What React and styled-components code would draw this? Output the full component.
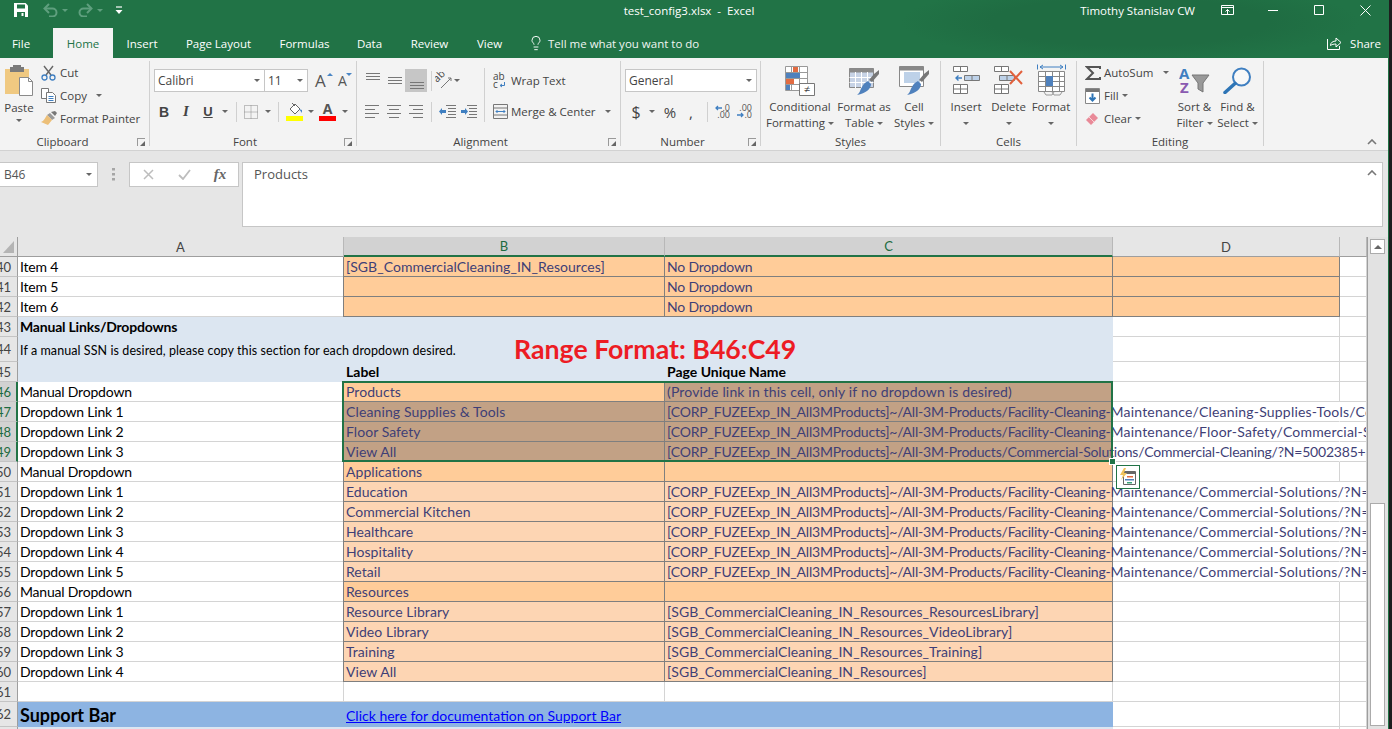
import styled, { createGlobalStyle } from "styled-components";
import { Lightbulb } from "lucide-react";

const UI = `"Open Sans", "Noto Sans", sans-serif`;
const CELL = `Lato, "Liberation Sans", sans-serif`;
const GREEN = "#217346";

const GlobalStyle = createGlobalStyle`
  html, body { margin: 0; padding: 0; background: #1e1e1e; overflow: hidden; }
  * { box-sizing: border-box; }
`;

const Page = styled.div`
  width: 1392px;
  height: 729px;
  overflow: hidden;
  background: #1e1e1e;
`;

const Win = styled.div`
  width: 1389px;
  height: 729px;
  display: flex;
  flex-direction: column;
  border-right: 1px solid ${GREEN};
  font-family: ${UI};
  color: #444;
`;

/* ---------- title bar + tabs ---------- */

const Header = styled.div`
  background: radial-gradient(ellipse 230px 40px at 1130px 22px, #1f6c42 60%, transparent 100%), ${GREEN};
  color: #fff;
`;

const TitleBar = styled.div`
  height: 28px;
  display: grid;
  grid-template-columns: 1fr auto 1fr;
  align-items: center;
  padding-right: 10px;
`;

const Quick = styled.div`
  display: flex;
  align-items: center;
  padding-left: 8px;
  margin-top: -8px;
`;

const Slot = styled.span`
  width: ${(p) => p.$w}px;
  margin-left: ${(p) => p.$ml || 0}px;
  flex: none;
  display: inline-flex;
  align-items: center;
  justify-content: center;
`;

const DocTitle = styled.div`
  font-size: 11.5px;
  white-space: pre;
  margin-top: -8px;
`;

const WinRight = styled.div`
  display: flex;
  align-items: center;
  justify-content: flex-end;
  margin-right: -10px;
  margin-top: -8px;
`;

const UserName = styled.span`
  font-size: 11.5px;
  margin-right: 9px;
`;

const WinBtn = styled.span`
  width: 46px;
  display: inline-flex;
  justify-content: center;
`;

const TabBar = styled.div`
  height: 30px;
  display: flex;
  align-items: stretch;
  font-size: 11.5px;
`;

const Tab = styled.div`
  width: ${(p) => p.$w}px;
  margin-right: ${(p) => p.$mr || 0}px;
  display: flex;
  align-items: center;
  justify-content: center;
  background: ${(p) => (p.$active ? "#f3f3f3" : "transparent")};
  color: ${(p) => (p.$active ? GREEN : "#fff")};
`;

const TellMe = styled.div`
  margin-left: 12px;
  display: flex;
  align-items: center;
  gap: 4px;
  color: #f0f5f2;
`;

const Share = styled.div`
  margin-left: auto;
  margin-right: 7px;
  display: flex;
  align-items: center;
  gap: 8px;
`;

/* ---------- ribbon ---------- */

const Ribbon = styled.div`
  height: 93px;
  background: #f3f3f3;
  border-bottom: 1px solid #d2d2d2;
  padding-top: 3px;
  display: flex;
  position: relative;
  font-size: 11.5px;
  color: #444;
`;

const Group = styled.div`
  width: ${(p) => p.$w}px;
  height: 85px;
  flex: none;
  border-right: 1px solid #d0d0d0;
  display: flex;
  flex-direction: column;
`;

const Body = styled.div`
  height: 75px;
  display: flex;
  align-items: flex-start;
  padding-left: ${(p) => p.$pl || 0}px;
`;

const GroupName = styled.div`
  height: 10px;
  line-height: 12px;
  margin-top: 1px;
  text-align: center;
  padding-right: ${(p) => p.$pr || 0}px;
  font-size: 11.5px;
  position: relative;
`;

const Launcher = styled.span`
  position: absolute;
  right: 4px;
  top: 2px;
  width: 8px;
  height: 8px;
  display: block;
  border-left: 1px solid #999;
  border-top: 1px solid #999;
  &::after {
    content: "";
    position: absolute;
    right: 0;
    bottom: 0;
    border-left: 5px solid transparent;
    border-bottom: 5px solid #666;
  }
`;

const Collapse = styled.span`
  position: absolute;
  right: 11px;
  bottom: 5px;
  display: flex;
`;

const Caret = styled.span`
  display: inline-block;
  width: 0;
  height: 0;
  border-left: 3px solid transparent;
  border-right: 3px solid transparent;
  border-top: 3px solid ${(p) => p.$c || "#666"};
  margin-left: ${(p) => p.$ml || 0}px;
  vertical-align: middle;
`;

const PasteBtn = styled.div`
  width: 41px;
  flex: none;
  display: flex;
  flex-direction: column;
  align-items: center;
  padding-right: 3px;
  padding-top: 3px;
  line-height: 15px;
  gap: 4px;
`;

const SmallStack = styled.div`
  width: ${(p) => p.$w}px;
  flex: none;
  padding-left: ${(p) => p.$pl || 0}px;
  display: flex;
  flex-direction: column;
`;

const SmallBtn = styled.div`
  height: 23px;
  display: flex;
  align-items: center;
  white-space: nowrap;
`;

const SmallIcon = styled.span`
  width: ${(p) => p.$w || 19}px;
  flex: none;
  display: inline-flex;
  align-items: center;
`;

const RowStack = styled.div`
  padding-top: 8px;
  display: flex;
  flex-direction: column;
  gap: 8px;
`;

const ToolRow = styled.div`
  height: 23px;
  display: flex;
  align-items: center;
  margin-left: ${(p) => p.$ml || 0}px;
`;

const Select = styled.div`
  width: ${(p) => p.$w}px;
  height: 23px;
  margin-left: ${(p) => p.$ml || 0}px;
  background: #fff;
  border: 1px solid #c6c6c6;
  display: flex;
  align-items: center;
  justify-content: space-between;
  padding: 0 4px 0 3px;
  font-size: 12px;
  color: #444;
`;

const Sep = styled.span`
  width: 1px;
  height: ${(p) => p.$h || 20}px;
  background: #d0d0d0;
  flex: none;
  margin-left: ${(p) => p.$ml || 0}px;
  margin-top: ${(p) => p.$mt || 0}px;
`;

const Tool = styled.span`
  width: ${(p) => p.$w || 22}px;
  height: 23px;
  flex: none;
  display: inline-flex;
  align-items: center;
  justify-content: center;
  background: ${(p) => (p.$on ? "#c6c6c6" : "transparent")};
  font-size: ${(p) => p.$fs || 13}px;
  color: #444;
`;

const Bold = styled(Tool)`
  font-family: "Liberation Sans", sans-serif;
  font-weight: 700;
  font-size: 14px;
`;

const Italic = styled(Tool)`
  font-family: "Liberation Serif", serif;
  font-style: italic;
  font-weight: 700;
  font-size: 15px;
`;

const Under = styled(Tool)`
  font-family: "Liberation Sans", sans-serif;
  font-weight: 700;
  font-size: 13px;
  text-decoration: underline;
`;

const GrowA = styled.span`
  position: relative;
  width: ${(p) => p.$w}px;
  margin-left: ${(p) => p.$ml}px;
  flex: none;
  font-size: ${(p) => p.$fs}px;
  line-height: 20px;
  color: #555;
  &::after {
    content: "";
    position: absolute;
    right: 0;
    top: 2px;
    border-left: 3px solid transparent;
    border-right: 3px solid transparent;
    ${(p) => (p.$down ? "border-top: 3px solid #4a86c5;" : "border-bottom: 3px solid #4a86c5;")}
  }
`;

const RowLabel = styled.span`
  white-space: nowrap;
`;

const Wide = styled.div`
  padding-top: 8px;
  padding-left: 8px;
  display: flex;
  flex-direction: column;
  gap: 8px;
`;

const BigBtn = styled.div`
  width: ${(p) => p.$w}px;
  flex: none;
  display: flex;
  flex-direction: column;
  align-items: center;
  line-height: 16px;
  white-space: nowrap;
`;

const BigIcon = styled.div`
  height: 38px;
  display: flex;
  align-items: flex-start;
  padding-top: ${(p) => p.$pt || 5}px;
`;

/* ---------- formula bar ---------- */

const FormulaBar = styled.div`
  height: 86px;
  background: #e6e6e6;
  display: flex;
  align-items: flex-start;
  padding-top: 11px;
`;

const NameBox = styled.div`
  width: 98px;
  height: 25px;
  background: #fff;
  border: 1px solid #c6c6c6;
  border-left: 0;
  display: flex;
  align-items: center;
  justify-content: space-between;
  padding: 0 5px 0 4px;
  font-size: 12px;
  color: #555;
`;

const Dots = styled.span`
  width: 31px;
  height: 25px;
  display: flex;
  align-items: center;
  justify-content: center;
`;

const FxBox = styled.div`
  width: 110px;
  height: 25px;
  background: #fff;
  border: 1px solid #c6c6c6;
  display: grid;
  grid-template-columns: 36px 36px 36px;
  align-items: center;
  justify-items: center;
`;

const FxMark = styled.span`
  font-family: "Liberation Serif", serif;
  font-style: italic;
  font-weight: 700;
  font-size: 15px;
  color: #666;
`;

const FormulaInput = styled.div`
  width: 1141px;
  height: 65px;
  margin-left: 3px;
  background: #fff;
  border: 1px solid #c6c6c6;
  padding: 3px 5px 3px 11px;
  font-size: 13px;
  line-height: 17px;
  color: #555;
  display: flex;
  justify-content: space-between;
`;

const FormulaChevron = styled.span`
  margin-top: 4px;
`;

/* ---------- sheet ---------- */

const Sheet = styled.div`
  flex: 1;
  min-height: 0;
  display: flex;
  background: #e6e6e6;
`;

const Grid = styled.div`
  width: 1367px;
  flex: none;
  overflow: hidden;
  position: relative;
  font-family: ${CELL};
  font-size: 14px;
  color: #000;
`;

const Row = styled.div`
  height: ${(p) => p.$h || 20}px;
  display: grid;
  grid-template-columns: 18px 326px 321px 448px 227px 27px;
  background: #fff;
`;

const HeadCell = styled.div`
  background: ${(p) => (p.$sel ? "#d2d2d2" : "#e6e6e6")};
  color: ${(p) => (p.$sel ? "#1d6b40" : "#444")};
  border-right: 1px solid ${(p) => (p.$end ? "#9e9e9e" : "#b8b8b8")};
  border-bottom: ${(p) => (p.$sel ? `2px solid ${GREEN}` : "1px solid #9e9e9e")};
  font-size: 13px;
  display: flex;
  align-items: center;
  justify-content: center;
  overflow: hidden;
`;

const Corner = styled(HeadCell)`
  align-items: flex-end;
  justify-content: flex-end;
  padding: 0 3px 3px 0;
`;

const RowNum = styled.div`
  background: ${(p) => (p.$sel ? "#d2d2d2" : "#e6e6e6")};
  color: ${(p) => (p.$sel ? "#1d6b40" : "#444")};
  border-right: ${(p) => (p.$sel ? `2px solid ${GREEN}` : "1px solid #9e9e9e")};
  border-bottom: 1px solid #c4c4c4;
  font-size: 13px;
  display: flex;
  align-items: center;
  justify-content: flex-end;
  padding-right: ${(p) => (p.$sel ? 5 : 6)}px;
  overflow: hidden;
`;

const TONES = {
  plain: "transparent",
  band: "#dce6f1",
  input: "#ffcc99",
  light: "#fdd5b3",
  sel: "#c2a185",
  support: "#8db4e2",
};

const Cell = styled.div`
  grid-column: span ${(p) => p.$span || 1};
  background: ${(p) => TONES[p.$tone || "plain"]};
  color: ${(p) => (["input", "light", "sel"].includes(p.$tone) ? "#3f3f76" : "#000")};
  font-weight: ${(p) => (p.$bold ? 700 : 400)};
  font-size: ${(p) => p.$fs || 14}px;
  letter-spacing: ${(p) => p.$ls ?? -0.2}px;
  border-right: 1px solid #d4d4d4;
  border-bottom: 1px solid #d4d4d4;
  ${(p) => p.$noRight && "border-right-color: transparent;"}
  ${(p) =>
    ["input", "light", "sel"].includes(p.$tone) &&
    "border-color: #7f7f7f; box-shadow: -1px 0 0 #7f7f7f;"}
  ${(p) => (p.$tone === "band" || p.$tone === "support") && "border-color: transparent;"}
  padding-left: 2px;
  padding-top: ${(p) => p.$pt || 0}px;
  white-space: nowrap;
  display: flex;
  align-items: center;
`;

const Tail = styled.span`
  letter-spacing: 0.2px;
`;

const DocLink = styled.span`
  color: #0000ff;
  text-decoration: underline;
  padding-top: 3px;
`;

const Selection = styled.div`
  position: absolute;
  left: 342px;
  top: 144px;
  width: 771px;
  height: 81px;
  border: 2px solid ${GREEN};
  pointer-events: none;
`;

const Handle = styled.span`
  position: absolute;
  right: -5px;
  bottom: -5px;
  width: 7px;
  height: 7px;
  background: ${GREEN};
  border: 1px solid #fff;
`;

const QuickBtn = styled.div`
  position: absolute;
  left: 1116px;
  top: 228px;
  width: 24px;
  height: 24px;
  background: #fff;
  border: 1px solid ${GREEN};
  display: flex;
  align-items: center;
  justify-content: center;
`;

const RangeNote = styled.div`
  position: absolute;
  left: 514px;
  top: 96px;
  font-weight: 700;
  font-size: 26.7px;
  line-height: 32px;
  color: #ed1c24;
  white-space: nowrap;
`;

const VScroll = styled.div`
  flex: 1;
  border-left: 1px solid #9e9e9e;
  padding: 2px 3px 3px 2px;
  display: flex;
  flex-direction: column;
  justify-content: space-between;
  background: #e2e2e2;
`;

const ScrollUp = styled.div`
  width: 15px;
  height: 15px;
  background: #fff;
  border: 1px solid #ababab;
  display: flex;
  align-items: center;
  justify-content: center;
`;

const Thumb = styled.div`
  width: 15px;
  height: 223px;
  background: #fff;
  border: 1px solid #ababab;
`;

const UpArrow = styled.span`
  border-left: 4px solid transparent;
  border-right: 4px solid transparent;
  border-bottom: 4px solid #666;
`;

/* ---------- icons ---------- */

const Ico = ({ w, h, children }) => (
  <svg width={w} height={h} viewBox={`0 0 ${w} ${h}`} style={{ display: "block", flex: "none" }}>
    {children}
  </svg>
);

const SaveIcon = () => (
  <Ico w={14} h={14}>
    <path d="M0 0h11.5L14 2.5V14H0z" fill="#fff" />
    <path d="M3 1.5h8v4H3z" fill={GREEN} />
    <path d="M3 9h8v5H3z" fill={GREEN} />
    <path d="M7.5 10h2v3h-2z" fill="#fff" />
  </Ico>
);

const UndoIcon = ({ flip }) => (
  <Ico w={15} h={14}>
    <g transform={flip ? "translate(15 0) scale(-1 1)" : undefined} fill="none" stroke="#5f9f7e" strokeWidth="2">
      <path d="M2 5.5h7.5a4 4 0 0 1 0 8H6" />
      <path d="M6 1L1.5 5.5L6 10" />
    </g>
  </Ico>
);

const CustomizeIcon = () => (
  <Ico w={8} h={9}>
    <path d="M1 1h6" stroke="#fff" strokeWidth="1.2" />
    <path d="M0.5 4h7L4 8z" fill="#fff" />
  </Ico>
);

const RestoreRibbon = () => (
  <Ico w={13} h={11}>
    <path d="M.5.5h12v9H.5zM.5 2.5h12" fill="none" stroke="#fff" />
    <path d="M6.5 9V4.5M4.5 6.5l2-2 2 2" fill="none" stroke="#fff" />
  </Ico>
);

const MinIcon = () => (
  <Ico w={10} h={10}>
    <path d="M0 5.5h10" stroke="#fff" />
  </Ico>
);

const MaxIcon = () => (
  <Ico w={10} h={10}>
    <path d="M.5.5h9v9h-9z" fill="none" stroke="#fff" />
  </Ico>
);

const CloseIcon = () => (
  <Ico w={11} h={11}>
    <path d="M.5.5l10 10M10.5.5l-10 10" stroke="#fff" />
  </Ico>
);

const ShareIcon = () => (
  <Ico w={15} h={14}>
    <path d="M.5 3v10.5h12V10" fill="none" stroke="#fff" />
    <path d="M3.5 9.5c0-3 2.5-4.5 5.5-4.500V2l5 4.500-5 4.500V8C6.500 8 5 8.500 3.500 9.500z" fill="none" stroke="#fff" />
  </Ico>
);

const PasteIcon = () => (
  <Ico w={30} h={32}>
    <path d="M1 5h24v25H1z" fill="#f0c981" />
    <path d="M6 3h3V1h8v2h3v5H6z" fill="#7a7a7a" />
    <path d="M15.500 13.500h9l4 4v14h-13z" fill="#fff" stroke="#8a8a8a" />
    <path d="M24.500 13.500v4h4" fill="none" stroke="#8a8a8a" />
  </Ico>
);

const CutIcon = () => (
  <Ico w={15} h={16}>
    <path d="M3 1l7 9M12 1L5 10" stroke="#666" strokeWidth="1.4" />
    <circle cx="3.500" cy="12.500" r="2.500" fill="none" stroke="#3f7fc1" strokeWidth="1.300" />
    <circle cx="11.500" cy="12.500" r="2.500" fill="none" stroke="#3f7fc1" strokeWidth="1.300" />
  </Ico>
);

const CopyIcon = () => (
  <Ico w={16} h={15}>
    <path d="M.5.5h7v10h-7z" fill="#fff" stroke="#777" />
    <path d="M5.500 4.500h6l3 3v7h-9z" fill="#fff" stroke="#777" />
    <path d="M7.500 8.500h5M7.500 10.500h5M7.500 12.500h5" stroke="#3f7fc1" />
  </Ico>
);

const PainterIcon = () => (
  <Ico w={17} h={15}>
    <path d="M10 1l4 4 2-3-2-2z" fill="#777" />
    <path d="M9 2l5 5-3 2-5-5z" fill="#999" />
    <path d="M6 4l5 5-4 5-7-3c3-1 4-4 6-7z" fill="#ecbf78" />
  </Ico>
);

const BorderIcon = () => (
  <Ico w={14} h={14}>
    <path d="M.5.5h13v13H.5z" fill="none" stroke="#888" strokeDasharray="1 1" />
    <path d="M7 .5v13M.5 7h13" stroke="#888" strokeDasharray="1 1" />
  </Ico>
);

const FillIcon = () => (
  <Ico w={17} h={19}>
    <path d="M4 7l5-5 5 5-5 5z" fill="#fff" stroke="#666" />
    <path d="M6 1l3 3" stroke="#666" />
    <path d="M13 7l3 1v3z" fill="#4a86c5" />
    <path d="M0 14h17v5H0z" fill="#ffff00" />
  </Ico>
);

const FontColorIcon = () => (
  <Ico w={17} h={19}>
    <text x="8.500" y="12" textAnchor="middle" fontFamily="Open Sans" fontWeight="700" fontSize="14" fill="#555">A</text>
    <path d="M0 14h17v5H0z" fill="#ff0000" />
  </Ico>
);

const Lines = ({ rows, h = 18 }) => (
  <Ico w={15} h={h}>
    {rows.map(([x1, x2, y]) => (
      <path key={`${x1}-${y}`} d={`M${x1} ${y}.5H${x2}`} stroke="#777" />
    ))}
  </Ico>
);

const TOP_ALIGN = [[1, 15, 1], [1, 15, 4], [1, 15, 7]];
const MID_ALIGN = [[1, 15, 5], [1, 15, 8], [1, 15, 11]];
const BOT_ALIGN = [[1, 15, 10], [1, 15, 13], [1, 15, 16]];
const LEFT = [[0, 14, 0], [0, 10, 4], [0, 14, 8], [0, 10, 12]];
const CENTER = [[0, 14, 0], [2, 12, 4], [0, 14, 8], [2, 12, 12]];
const RIGHT = [[0, 14, 0], [4, 14, 4], [0, 14, 8], [4, 14, 12]];

const OrientIcon = () => (
  <Ico w={17} h={17}>
    <text transform="translate(2 11) rotate(-45)" fontSize="10.500" fontFamily="Open Sans" fill="#444">ab</text>
    <path d="M6 16L16 6M16 6h-3M16 6v3" fill="none" stroke="#777" />
  </Ico>
);

const IndentIcon = ({ more }) => (
  <Ico w={17} h={13}>
    <path d="M7 .5h10M9 3.500h8M9 6.500h8M9 9.500h8M7 12.500h10" stroke="#777" transform={more ? "translate(-1 0)" : undefined} />
    {more ? (
      <path d="M0 5h4V3l3 3.500L4 10V8H0z" fill="#3f7fc1" />
    ) : (
      <path d="M7 5H3V3L0 6.500 3 10V8h4z" fill="#3f7fc1" />
    )}
  </Ico>
);

const WrapIcon = () => (
  <Ico w={13} h={17}>
    <text x="0" y="8" fontSize="10" fontFamily="Open Sans" fill="#444">ab</text>
    <text x="0" y="16" fontSize="10" fontFamily="Open Sans" fill="#444">c</text>
    <path d="M11.500 10v3.500H7.500M9 12l-2 1.500L9 15" fill="none" stroke="#3f7fc1" />
  </Ico>
);

const MergeIcon = () => (
  <Ico w={15} h={15}>
    <path d="M.5.5h14v14H.5zM.5 4h14M.5 11h14" fill="none" stroke="#777" />
    <path d="M3 7.500h9M4.500 6l-1.500 1.500L4.500 9M10.500 6l1.500 1.500L10.500 9" fill="none" stroke="#3f7fc1" />
  </Ico>
);

const DecIcon = ({ more }) => (
  <Ico w={15} h={15}>
    <text x="15" y="6.500" textAnchor="end" fontSize="9" fontFamily="Open Sans" fill="#555">{more ? ".00" : ".0"}</text>
    <text x="15" y="14" textAnchor="end" fontSize="9" fontFamily="Open Sans" fill="#555">{more ? ".0" : ".00"}</text>
    {more ? (
      <path d="M0 11h6M4 9l2 2-2 2" fill="none" stroke="#3f7fc1" strokeWidth="1.300" />
    ) : (
      <path d="M7 4H1M3 2L1 4l2 2" fill="none" stroke="#3f7fc1" strokeWidth="1.300" />
    )}
  </Ico>
);

const CondIcon = () => (
  <Ico w={31} h={30}>
    <path d="M.5.5h22v24H.5zM.5 6.500h22M.5 12.500h22M.5 18.500h22M6.500.5v24M14.500.5v24" fill="#fff" stroke="#999" />
    <path d="M8 1h5v5H8z" fill="#e26b41" />
    <path d="M1 7h14v5H1z" fill="#4f81bd" />
    <path d="M1 13h8v5H1z" fill="#e26b41" />
    <path d="M1 19h4v5H1z" fill="#4f81bd" />
    <path d="M14.500 17.500h15v12h-15z" fill="#fff" stroke="#777" />
    <text x="22" y="27" textAnchor="middle" fontSize="11" fontFamily="Open Sans" fill="#444">≠</text>
  </Ico>
);

const TableIcon = () => (
  <Ico w={30} h={28}>
    <path d="M.5.5h24v19H.5z" fill="#c7d3e6" stroke="#888" />
    <path d="M.5.5h24v4H.5z" fill="#8a8a8a" />
    <path d="M.5 9.500h24M.5 14.500h24M6.500 4v16M12.500 4v16M18.500 4v16" stroke="#fff" />
    <path d="M25 6l5-4v4l-7 8-3-2z" fill="#777" />
    <path d="M19 13l3 3c0 5-5 9-14 11 3-2 3-5 5-8 1-3 4-5 6-6z" fill="#4f81bd" />
  </Ico>
);

const StyleIcon = () => (
  <Ico w={30} h={30}>
    <path d="M.5.5h24v20H.5z" fill="#fff" stroke="#888" />
    <path d="M.5.5h24v4H.5z" fill="#888" />
    <path d="M5 6h16v11H5z" fill="#bdd1e8" />
    <path d="M25 8l5-4v4l-7 8-3-2z" fill="#777" />
    <path d="M19 15l3 3c0 5-5 9-14 11 3-2 3-5 5-8 1-3 4-5 6-6z" fill="#4f81bd" />
  </Ico>
);

const InsertIcon = () => (
  <Ico w={27} h={28}>
    <path d="M.5.5h14v5H.5zM7.500.5v5M.5 18.500h14v9H.5zM.5 23h14M7.500 18.500v9" fill="#fff" stroke="#777" />
    <path d="M11.500 9.500h15v5h-15zM19 9.500v5" fill="#bdd1e8" stroke="#777" />
    <path d="M9 12H3M5.500 9.500L3 12l2.500 2.500" fill="none" stroke="#3f7fc1" strokeWidth="1.400" />
  </Ico>
);

const DeleteIcon = () => (
  <Ico w={30} h={28}>
    <path d="M.5.5h14v5H.5zM7.500.5v5M.5 18.500h14v9H.5zM.5 23h14M7.500 18.500v9" fill="#fff" stroke="#777" />
    <path d="M5.500 9.500h15v5h-15zM13 9.500v5" fill="#bdd1e8" stroke="#777" />
    <path d="M16 5l12 13M28 5L16 18" stroke="#e2603c" strokeWidth="2" />
  </Ico>
);

const FormatIcon = () => (
  <Ico w={29} h={33}>
    <path d="M.5.500v5M28.500.500v5M3 3h23M6 1L3 3l3 2M23 1l3 2-3 2" fill="none" stroke="#3f7fc1" />
    <path d="M1.500 7.500h26v20h-26zM1.500 12.500h26M1.500 17.500h26M1.500 22.500h26M8.500 7.500v20M15.500 7.500v20M22.500 7.500v20" fill="#fff" stroke="#888" />
    <path d="M9 12h7v10H9z" fill="#4f81bd" />
    <path d="M7 28l2 3h6l2-3M15 28l2 3h6l2-3" fill="none" stroke="#999" />
  </Ico>
);

const SigmaIcon = () => (
  <Ico w={16} h={14}>
    <path d="M15 3V1H2l6 6-6 6h13v-2" fill="none" stroke="#555" strokeWidth="2" />
  </Ico>
);

const FillDownIcon = () => (
  <Ico w={15} h={16}>
    <path d="M.5.5h14v15H.5z" fill="#fff" stroke="#888" />
    <path d="M1 1h13v3H1z" fill="#777" />
    <path d="M7.500 5.500v7M4.500 9.500l3 3 3-3" fill="none" stroke="#2e75b6" strokeWidth="2" />
  </Ico>
);

const EraserIcon = () => (
  <Ico w={14} h={14}>
    <path d="M8 1l5 5-7 7-5-5z" fill="#e98a98" />
    <path d="M4 5l5 5" stroke="#f8d3d8" />
  </Ico>
);

const SortIcon = () => (
  <Ico w={31} h={27}>
    <text x="0" y="12" fontSize="15" fontWeight="700" fontFamily="Open Sans" fill="#3f7fc1">A</text>
    <text x="1" y="26" fontSize="15" fontWeight="700" fontFamily="Open Sans" fill="#8a5ab0">Z</text>
    <path d="M13 8h17l-6 8v9l-5-3v-6z" fill="#999" stroke="#777" />
  </Ico>
);

const FindIcon = () => (
  <Ico w={29} h={27}>
    <circle cx="18.500" cy="10" r="8.500" fill="#fff" fillOpacity=".4" stroke="#3f7fc1" strokeWidth="2" />
    <path d="M12 16.500L2 25.500" stroke="#2e75b6" strokeWidth="3.500" strokeLinecap="round" />
  </Ico>
);

const QuickIcon = () => (
  <Ico w={18} h={18}>
    <path d="M4.500 3.500h12v13h-12z" fill="#fff" stroke="#666" />
    <path d="M5 3h11v3H5z" fill="#666" />
    <path d="M8 8h6v1.500H8z" fill="#e26b41" />
    <path d="M6 11h9v1.500H6z" fill="#4f81bd" />
    <path d="M8 14h5v1.500H8z" fill="#3aa27a" />
    <path d="M5 0L1 7h3l-2 5 6-7H5l2-5z" fill="#f0c35c" />
  </Ico>
);

const Chevron = () => (
  <Ico w={10} h={6}>
    <path d="M1 5l4-4 4 4" fill="none" stroke="#777" strokeWidth="1.600" />
  </Ico>
);

const TriCorner = () => (
  <Ico w={11} h={12}>
    <path d="M11 0v12H0z" fill="#b4b4b4" />
  </Ico>
);

/* ---------- data ---------- */

const CORP = "[CORP_FUZEExp_IN_All3MProducts]~/All-3M-Products/";
const CLEAN = `${CORP}Facility-Cleaning-`;
const SOL_TAIL = "Maintenance/Commercial-Solutions/?N=5002385+3294739562";
const SGB = "[SGB_CommercialCleaning_IN_Resources";

const ROWS = [
  { n: 40, a: "Item 4", b: `${SGB}]`, c: "No Dropdown", kind: "item" },
  { n: 41, a: "Item 5", c: "No Dropdown", kind: "item" },
  { n: 42, a: "Item 6", c: "No Dropdown", kind: "item" },
  { n: 43, a: "Manual Links/Dropdowns", kind: "title" },
  { n: 44, a: "If a manual SSN is desired, please copy this section for each dropdown desired.", kind: "note", h: 25 },
  { n: 45, b: "Label", c: "Page Unique Name", kind: "head" },
  { n: 46, sel: true, a: "Manual Dropdown", b: "Products", c: "(Provide link in this cell, only if no dropdown is desired)", cls: 0.16, bt: "input", ct: "sel" },
  { n: 47, sel: true, a: "Dropdown Link 1", b: "Cleaning Supplies & Tools", bls: 0.12, c: CLEAN, tail: "Maintenance/Cleaning-Supplies-Tools/Commercial-Cleaning/?N=5002385", bt: "sel", ct: "sel", spill: true },
  { n: 48, sel: true, a: "Dropdown Link 2", b: "Floor Safety", c: CLEAN, tail: "Maintenance/Floor-Safety/Commercial-Solutions/?N=5002385+3294", bt: "sel", ct: "sel", spill: true },
  { n: 49, sel: true, a: "Dropdown Link 3", b: "View All", c: `${CORP}Commercial-Solutions/Commercial-Cleaning/?N=5002385+3294739562`, bt: "sel", ct: "sel", spill: true },
  { n: 50, a: "Manual Dropdown", b: "Applications", bt: "input", ct: "input" },
  { n: 51, a: "Dropdown Link 1", b: "Education", c: CLEAN, tail: SOL_TAIL, bt: "light", ct: "light", spill: true },
  { n: 52, a: "Dropdown Link 2", b: "Commercial Kitchen", c: CLEAN, tail: SOL_TAIL, bt: "light", ct: "light", spill: true },
  { n: 53, a: "Dropdown Link 3", b: "Healthcare", c: CLEAN, tail: SOL_TAIL, bt: "light", ct: "light", spill: true },
  { n: 54, a: "Dropdown Link 4", b: "Hospitality", c: CLEAN, tail: SOL_TAIL, bt: "light", ct: "light", spill: true },
  { n: 55, a: "Dropdown Link 5", b: "Retail", c: CLEAN, tail: SOL_TAIL, bt: "light", ct: "light", spill: true },
  { n: 56, a: "Manual Dropdown", b: "Resources", bt: "input", ct: "input" },
  { n: 57, a: "Dropdown Link 1", b: "Resource Library", c: `${SGB}_ResourcesLibrary]`, cls: 0.07, bt: "light", ct: "light" },
  { n: 58, a: "Dropdown Link 2", b: "Video Library", c: `${SGB}_VideoLibrary]`, cls: 0.07, bt: "light", ct: "light" },
  { n: 59, a: "Dropdown Link 3", b: "Training", c: `${SGB}_Training]`, cls: 0.07, bt: "light", ct: "light" },
  { n: 60, a: "Dropdown Link 4", b: "View All", c: `${SGB}]`, cls: 0.07, bt: "light", ct: "light" },
  { n: 61 },
];

const SheetRow = ({ r }) => {
  if (r.kind === "title") {
    return (
      <Row>
        <RowNum>{r.n}</RowNum>
        <Cell $tone="band" $span={3} $bold>{r.a}</Cell>
        <Cell />
        <Cell />
      </Row>
    );
  }
  if (r.kind === "note") {
    return (
      <Row $h={r.h}>
        <RowNum>{r.n}</RowNum>
        <Cell $tone="band" $span={3} $fs={12.5} $ls={0.08} $pt={3}>{r.a}</Cell>
        <Cell />
        <Cell />
      </Row>
    );
  }
  if (r.kind === "head") {
    return (
      <Row>
        <RowNum>{r.n}</RowNum>
        <Cell $tone="band" />
        <Cell $tone="band" $bold $ls={0}>{r.b}</Cell>
        <Cell $tone="band" $bold $ls={0}>{r.c}</Cell>
        <Cell />
        <Cell />
      </Row>
    );
  }
  const item = r.kind === "item";
  return (
    <Row>
      <RowNum $sel={r.sel}>{r.n}</RowNum>
      <Cell>{r.a}</Cell>
      <Cell $tone={item ? "input" : r.bt} $ls={r.bls ?? 0.05}>{r.b}</Cell>
      <Cell $tone={item ? "input" : r.ct} $ls={r.cls}>
        {r.c}
        {r.tail ? <Tail>{r.tail}</Tail> : null}
      </Cell>
      <Cell $tone={item ? "input" : "plain"} $noRight={r.spill} />
      <Cell />
    </Row>
  );
};

const Launch = ({ pr, children }) => (
  <GroupName $pr={pr}>
    {children}
    {pr ? <Launcher /> : null}
  </GroupName>
);

export default function App() {
  return (
    <Page>
      <GlobalStyle />
      <Win>
        <Header>
          <TitleBar>
            <Quick>
              <Slot $w={26}><SaveIcon /></Slot>
              <Slot $w={20} $ml={6}><UndoIcon /></Slot>
              <Slot $w={10}><Caret $c="#5f9f7e" /></Slot>
              <Slot $w={20} $ml={5}><UndoIcon flip /></Slot>
              <Slot $w={10}><Caret $c="#5f9f7e" /></Slot>
              <Slot $w={10} $ml={9}><CustomizeIcon /></Slot>
            </Quick>
            <DocTitle>test_config3.xlsx  -  Excel</DocTitle>
            <WinRight>
              <UserName>Timothy Stanislav CW</UserName>
              <WinBtn><RestoreRibbon /></WinBtn>
              <WinBtn><MinIcon /></WinBtn>
              <WinBtn><MaxIcon /></WinBtn>
              <WinBtn><CloseIcon /></WinBtn>
            </WinRight>
          </TitleBar>
          <TabBar>
            <Tab $w={42} $mr={11}>File</Tab>
            <Tab $w={60} $active>Home</Tab>
            <Tab $w={58}>Insert</Tab>
            <Tab $w={95}>Page Layout</Tab>
            <Tab $w={77}>Formulas</Tab>
            <Tab $w={53}>Data</Tab>
            <Tab $w={67}>Review</Tab>
            <Tab $w={53}>View</Tab>
            <TellMe>
              <Lightbulb size={16} strokeWidth={1.4} color="#fff" />
              Tell me what you want to do
            </TellMe>
            <Share>
              <ShareIcon />
              Share
            </Share>
          </TabBar>
        </Header>

        <Ribbon>
          <Group $w={150}>
            <Body>
              <PasteBtn>
                <PasteIcon />
                <span>Paste</span>
                <Caret />
              </PasteBtn>
              <SmallStack $w={108}>
                <SmallBtn><SmallIcon><CutIcon /></SmallIcon>Cut</SmallBtn>
                <SmallBtn><SmallIcon><CopyIcon /></SmallIcon>Copy<Caret $ml={9} /></SmallBtn>
                <SmallBtn><SmallIcon><PainterIcon /></SmallIcon>Format Painter</SmallBtn>
              </SmallStack>
            </Body>
            <Launch pr={24}>Clipboard</Launch>
          </Group>

          <Group $w={207}>
            <Body $pl={4}>
              <RowStack>
                <ToolRow>
                  <Select $w={111}>Calibri<Caret /></Select>
                  <Select $w={44} $ml={-1}>11<Caret /></Select>
                  <GrowA $w={18} $fs={17} $ml={7}>A</GrowA>
                  <GrowA $w={14} $fs={14} $ml={5} $down>A</GrowA>
                </ToolRow>
                <ToolRow $ml={-1}>
                  <Bold>B</Bold>
                  <Italic>I</Italic>
                  <Under>U</Under>
                  <Tool $w={12}><Caret /></Tool>
                  <Sep $ml={5} />
                  <Tool $w={28}><BorderIcon /></Tool>
                  <Tool $w={6}><Caret /></Tool>
                  <Sep $ml={7} />
                  <Tool $w={30}><FillIcon /></Tool>
                  <Tool $w={3}><Caret /></Tool>
                  <Tool $w={30}><FontColorIcon /></Tool>
                  <Tool $w={6}><Caret /></Tool>
                </ToolRow>
              </RowStack>
            </Body>
            <Launch pr={16}>Font</Launch>
          </Group>

          <Group $w={264}>
            <Body $pl={4}>
              <RowStack>
                <ToolRow>
                  <Tool><Lines rows={TOP_ALIGN} /></Tool>
                  <Tool><Lines rows={MID_ALIGN} /></Tool>
                  <Tool $on><Lines rows={BOT_ALIGN} /></Tool>
                  <Sep $ml={4} />
                  <Tool $w={22}><OrientIcon /></Tool>
                  <Tool $w={6}><Caret /></Tool>
                </ToolRow>
                <ToolRow>
                  <Tool><Lines rows={LEFT} h={14} /></Tool>
                  <Tool><Lines rows={CENTER} h={14} /></Tool>
                  <Tool><Lines rows={RIGHT} h={14} /></Tool>
                  <Sep $ml={4} />
                  <Tool $w={30}><IndentIcon /></Tool>
                  <Tool $w={14}><IndentIcon more /></Tool>
                </ToolRow>
              </RowStack>
              <Sep $h={54} $mt={7} $ml={8} />
              <Wide>
                <ToolRow>
                  <SmallIcon $w={18}><WrapIcon /></SmallIcon>
                  <RowLabel>Wrap Text</RowLabel>
                </ToolRow>
                <ToolRow>
                  <SmallIcon $w={18}><MergeIcon /></SmallIcon>
                  <RowLabel>Merge & Center</RowLabel>
                  <Caret $ml={9} />
                </ToolRow>
              </Wide>
            </Body>
            <Launch pr={16}>Alignment</Launch>
          </Group>

          <Group $w={140}>
            <Body $pl={4}>
              <RowStack>
                <Select $w={132}>General<Caret /></Select>
                <ToolRow>
                  <Tool $w={22} $fs={16}>$</Tool>
                  <Tool $w={10}><Caret /></Tool>
                  <Tool $w={26} $fs={15}>%</Tool>
                  <Tool $w={16} $fs={15}>,</Tool>
                  <Sep $ml={8} />
                  <Tool $w={28}><DecIcon /></Tool>
                  <Tool $w={16}><DecIcon more /></Tool>
                </ToolRow>
              </RowStack>
            </Body>
            <Launch pr={16}>Number</Launch>
          </Group>

          <Group $w={180}>
            <Body>
              <BigBtn $w={78}>
                <BigIcon><CondIcon /></BigIcon>
                Conditional
                <span>Formatting<Caret $ml={3} /></span>
              </BigBtn>
              <BigBtn $w={50}>
                <BigIcon $pt={7}><TableIcon /></BigIcon>
                Format as
                <span>Table<Caret $ml={3} /></span>
              </BigBtn>
              <BigBtn $w={50}>
                <BigIcon><StyleIcon /></BigIcon>
                Cell
                <span>Styles<Caret $ml={3} /></span>
              </BigBtn>
            </Body>
            <Launch>Styles</Launch>
          </Group>

          <Group $w={136}>
            <Body>
              <BigBtn $w={50}>
                <BigIcon><InsertIcon /></BigIcon>
                Insert
                <span><Caret /></span>
              </BigBtn>
              <BigBtn $w={35}>
                <BigIcon><DeleteIcon /></BigIcon>
                Delete
                <span><Caret /></span>
              </BigBtn>
              <BigBtn $w={50}>
                <BigIcon $pt={3}><FormatIcon /></BigIcon>
                Format
                <span><Caret /></span>
              </BigBtn>
            </Body>
            <Launch>Cells</Launch>
          </Group>

          <Group $w={187}>
            <Body>
              <SmallStack $w={96} $pl={8}>
                <SmallBtn><SmallIcon><SigmaIcon /></SmallIcon>AutoSum<Caret $ml={10} /></SmallBtn>
                <SmallBtn><SmallIcon><FillDownIcon /></SmallIcon>Fill<Caret $ml={3} /></SmallBtn>
                <SmallBtn><SmallIcon><EraserIcon /></SmallIcon>Clear<Caret $ml={3} /></SmallBtn>
              </SmallStack>
              <BigBtn $w={43}>
                <BigIcon $pt={6}><SortIcon /></BigIcon>
                Sort &
                <span>Filter<Caret $ml={3} /></span>
              </BigBtn>
              <BigBtn $w={43}>
                <BigIcon $pt={6}><FindIcon /></BigIcon>
                Find &
                <span>Select<Caret $ml={3} /></span>
              </BigBtn>
            </Body>
            <Launch>Editing</Launch>
          </Group>

          <Collapse><Chevron /></Collapse>
        </Ribbon>

        <FormulaBar>
          <NameBox>B46<Caret /></NameBox>
          <Dots>
            <Ico w={3} h={13}>
              <path d="M0 0h3v2.500H0zM0 5h3v2.500H0zM0 10h3v2.500H0z" fill="#a6a6a6" />
            </Ico>
          </Dots>
          <FxBox>
            <Ico w={11} h={11}><path d="M1 1l9 9M10 1l-9 9" stroke="#bdbdbd" strokeWidth="1.500" /></Ico>
            <Ico w={13} h={11}><path d="M1 6l4 4 7-9" fill="none" stroke="#bdbdbd" strokeWidth="1.800" /></Ico>
            <FxMark>fx</FxMark>
          </FxBox>
          <FormulaInput>
            Products
            <FormulaChevron><Chevron /></FormulaChevron>
          </FormulaInput>
        </FormulaBar>

        <Sheet>
          <Grid>
            <Row>
              <Corner $end><TriCorner /></Corner>
              <HeadCell>A</HeadCell>
              <HeadCell $sel>B</HeadCell>
              <HeadCell $sel>C</HeadCell>
              <HeadCell>D</HeadCell>
              <HeadCell />
            </Row>
            {ROWS.map((r) => <SheetRow key={r.n} r={r} />)}
            <Row $h={25}>
              <RowNum>62</RowNum>
              <Cell $tone="support" $bold $fs={18} $ls={0} $pt={2}>Support Bar</Cell>
              <Cell $tone="support" $ls={0}><DocLink>Click here for documentation on Support Bar</DocLink></Cell>
              <Cell $tone="support" />
              <Cell />
              <Cell />
            </Row>
            <Row>
              <RowNum>63</RowNum>
              <Cell $tone="band" />
              <Cell $tone="band" />
              <Cell $tone="band" />
              <Cell />
              <Cell />
            </Row>
            <RangeNote>Range Format: B46:C49</RangeNote>
            <Selection><Handle /></Selection>
            <QuickBtn><QuickIcon /></QuickBtn>
          </Grid>
          <VScroll>
            <ScrollUp><UpArrow /></ScrollUp>
            <Thumb />
          </VScroll>
        </Sheet>
      </Win>
    </Page>
  );
}
